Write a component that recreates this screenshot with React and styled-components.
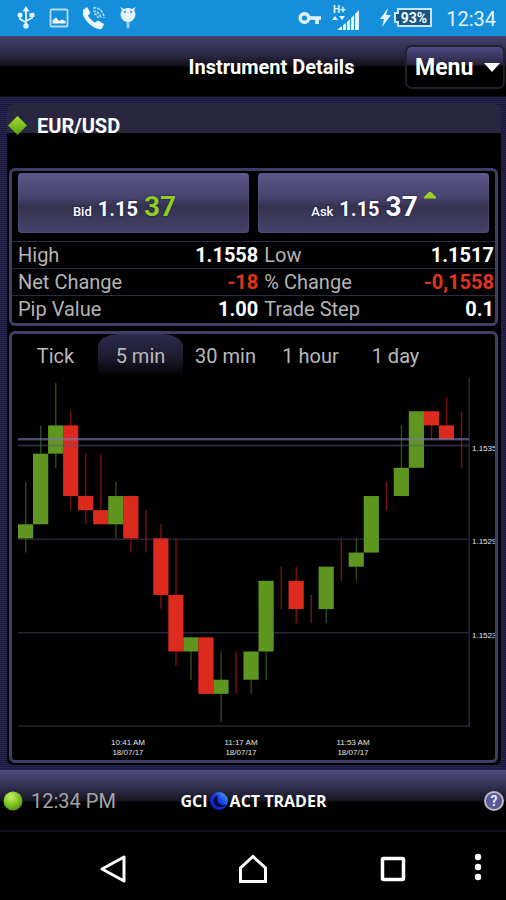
import { useState } from 'react';
import styled, { createGlobalStyle, css } from 'styled-components';

const GlobalStyle = createGlobalStyle`
  * {
    box-sizing: border-box;
  }

  body {
    margin: 0;
    background: #000;
    color: #fff;
    font-family: Roboto, 'Liberation Sans', sans-serif;
  }

  button {
    font-family: inherit;
    color: inherit;
    border: none;
    padding: 0;
    background: none;
    cursor: pointer;
  }
`;

const Screen = styled.div`
  display: flex;
  flex-direction: column;
  min-height: 100vh;
`;

const StatusBar = styled.div`
  display: flex;
  align-items: center;
  justify-content: space-between;
  height: 36px;
  padding: 0 10px 0 16px;
  background: #158fdc;
  color: #e4f4ff;
`;

const StatusGroup = styled.div`
  display: flex;
  align-items: center;
  gap: ${(props) => props.$gap}px;
`;

const Clock = styled.span`
  margin-left: 4px;
  padding-top: 2px;
  font-size: 20px;
  line-height: 34px;
`;

const Header = styled.header`
  display: grid;
  grid-template-columns: 1fr auto 1fr;
  align-items: center;
  height: 61px;
  padding: 2px 3px 0 0;
  background: linear-gradient(#45416f 0, #28253f 20px, #11101a 30px, #000 31px);
  border-bottom: 1px solid #0e0d18;
`;

const Title = styled.h1`
  grid-column: 2;
  margin: 0;
  padding-left: 40px;
  font-size: 20px;
  line-height: 24px;
  font-weight: 700;
`;

const MenuButton = styled.button`
  justify-self: end;
  display: flex;
  align-items: center;
  justify-content: space-between;
  width: 96px;
  height: 40px;
  padding: 0 3px 0 8px;
  border-radius: 5px;
  background: linear-gradient(#504b85 0, #27243f 18px, #000 19px);
  box-shadow: 0 0 1px 2px #24222e;
  font-size: 23px;
  font-weight: 700;
`;

const Body = styled.main`
  flex: 1;
  display: flex;
  flex-direction: column;
  padding: 7px 5px 5px 7px;
  background: repeating-linear-gradient(#28254f 0 1px, #19173b 1px 2px);
`;

const Content = styled.div`
  flex: 1;
  display: flex;
  flex-direction: column;
  padding-bottom: 2px;
  border-radius: 6px;
  overflow: hidden;
  background: #000;
`;

const SymbolBar = styled.div`
  display: flex;
  align-items: center;
  gap: 9px;
  height: 29px;
  padding-top: 14px;
  margin-bottom: 35px;
  background: #292740;
`;

const SymbolName = styled.h2`
  margin: 0;
  font-size: 20px;
  line-height: 24px;
  font-weight: 700;
`;

const panel = css`
  margin: 0 3px 0 2px;
  border: 3px solid #403d68;
  border-radius: 6px;
`;

const QuotePanel = styled.section`
  ${panel}
  margin-bottom: 5px;
`;

const Quotes = styled.div`
  display: grid;
  grid-template-columns: 1fr 1fr;
  gap: 9px;
  padding: 2px 6px 8px;
`;

const QuoteButton = styled.button`
  display: flex;
  align-items: baseline;
  justify-content: center;
  gap: 6px;
  height: 60px;
  padding-top: 18px;
  border-radius: 4px;
  background: linear-gradient(#5b5788, #45426c 42%, #35324f 56%, #45416c);
  box-shadow: inset 0 0 2px #6b6798;
  font-weight: 700;
  line-height: 32px;
  text-shadow: 0 0 2px #0b0a50;
`;

const QuoteSide = styled.span`
  font-size: 13px;
  font-weight: 500;
`;

const QuoteBase = styled.span`
  font-size: 20px;
`;

const QuotePips = styled.span`
  font-size: 28px;
  color: ${(props) => (props.$up ? '#8fce1e' : '#fff')};
`;

const Trend = styled.span`
  display: flex;
  align-self: flex-start;
  width: 12px;
`;

const Stats = styled.table`
  width: 100%;
  border-collapse: collapse;
  font-size: 20px;
`;

const StatRow = styled.tr`
  border-top: 1px solid #2b2944;
  height: 27px;
`;

const StatLabel = styled.th`
  width: 26%;
  padding: 0 0 0 6px;
  color: #b4b4b4;
  font-weight: 400;
  text-align: left;
  white-space: nowrap;
`;

const StatValue = styled.td`
  padding: 0 1px 0 0;
  color: ${(props) => (props.$down ? '#e2341d' : '#fff')};
  font-weight: 700;
  text-align: right;

  &:nth-child(2) {
    width: 25%;
    padding: 0;
  }
`;

const ChartPanel = styled.section`
  ${panel}
  flex: 1;
`;

const Tabs = styled.div`
  display: flex;
  padding-left: 1px;
`;

const Tab = styled.button`
  width: 85px;
  height: 41px;
  padding-top: 3px;
  border-radius: 22px 22px 0 0 / 12px 12px 0 0;
  background: ${(props) => (props.$active ? 'linear-gradient(#2e2b4d, #1b1a2c 60%, #020203)' : 'none')};
  color: #b9b9b9;
  font-size: 20px;
`;

const ChartSvg = styled.svg`
  display: block;
  width: 100%;
  height: auto;
`;

const Footer = styled.footer`
  display: grid;
  grid-template-columns: 1fr auto 1fr;
  align-items: center;
  height: 62px;
  padding: 2px 2px 0 3px;
  background: linear-gradient(#4f4b7d 0, #2a2744 21px, #16151f 31px, #000 32px);
  border-bottom: 2px solid #12111f;
`;

const Connection = styled.div`
  display: flex;
  align-items: center;
  gap: 8px;
  color: #a5a5a5;
  font-size: 20px;
`;

const Brand = styled.div`
  display: flex;
  align-items: center;
  gap: 1px;
  font-family: 'Open Sans', sans-serif;
  font-size: 16px;
  font-weight: 700;
`;

const HelpButton = styled.button`
  justify-self: end;
  width: 20px;
  height: 20px;
  border: 2px solid #b9b8c8;
  border-radius: 50%;
  background: #5b5995;
  color: #e6e6f2;
  font-size: 14px;
  line-height: 16px;
  font-weight: 700;
`;

const NavBar = styled.nav`
  display: grid;
  grid-template-columns: 1fr 140px 140px 140px 1fr;
  height: 68px;
  padding-top: 5px;
`;

const NavButton = styled.button`
  display: flex;
  align-items: center;
  justify-content: center;
`;

const MoreButton = styled(NavButton)`
  width: 30px;
  padding-bottom: 4px;
`;

const STATS = [
  [{ label: 'High', value: '1.1558' }, { label: 'Low', value: '1.1517' }],
  [{ label: 'Net Change', value: '-18', down: true }, { label: '% Change', value: '-0,1558', down: true }],
  [{ label: 'Pip Value', value: '1.00' }, { label: 'Trade Step', value: '0.1' }],
];

const PERIODS = ['Tick', '5 min', '30 min', '1 hour', '1 day'];

// [direction, wick top, body top, body bottom, wick bottom], in pips below the top
const CANDLES = [
  ['up', 7, 10, 11, 12],
  ['up', 3, 5, 10, 10],
  ['up', 0, 3, 5, 6],
  ['down', 2, 3, 8, 9],
  ['down', 5, 8, 9, 10],
  ['down', 5, 9, 10, 10],
  ['up', 7, 8, 10, 11],
  ['down', 8, 8, 11, 12],
  ['down', 9, 9, 9, 12],
  ['down', 10, 11, 15, 16],
  ['down', 11, 15, 19, 20],
  ['up', 18, 18, 19, 21],
  ['down', 18, 18, 22, 22],
  ['up', 19, 21, 22, 24],
  ['down', 19, 19, 19, 22],
  ['up', 19, 19, 21, 22],
  ['up', 14, 14, 19, 21],
  ['down', 13, 13, 13, 16],
  ['down', 13, 14, 16, 17],
  ['down', 15, 15, 15, 17],
  ['up', 13, 13, 16, 17],
  ['down', 11, 11, 11, 14],
  ['up', 11, 12, 13, 14],
  ['up', 8, 8, 12, 12],
  ['down', 7, 7, 7, 9],
  ['up', 3, 6, 8, 8],
  ['up', 2, 2, 6, 6],
  ['down', 2, 2, 3, 4],
  ['down', 1, 3, 4, 4],
  ['down', 2, 2, 2, 6],
];

const STEP = 15.03;
const PIP = 14.13;
const TOP = 8;

const BODY_COLORS = { up: '#5e9620', down: '#dd2a1f' };
const WICK_COLORS = { up: '#2f4d0e', down: '#76130f' };

function Candle({ index, data }) {
  const [dir, high, open, close, low] = data;
  const x = 6 + index * STEP;
  const y = (level) => TOP + level * PIP;
  return (
    <g>
      <rect x={x + 7} y={y(high)} width="1.4" height={y(low) - y(high)} fill={WICK_COLORS[dir]} />
      {close > open && (
        <rect x={x} y={y(open)} width="15.2" height={y(close) - y(open)} fill={BODY_COLORS[dir]} />
      )}
    </g>
  );
}

function Chart() {
  return (
    <ChartSvg viewBox="0 0 483 384" role="img" aria-label="EUR/USD">
      <g fill="#292741">
        <rect x="6" y="163.5" width="451" height="1.4" />
        <rect x="6" y="257" width="451" height="1.4" />
        <rect x="6" y="350" width="452" height="2" fill="#1d1b2e" />
        <rect x="456.5" y="3" width="1.6" height="349" fill="#252338" />
      </g>
      {CANDLES.map((data, i) => (
        <Candle key={i} index={i} data={data} />
      ))}
      <rect x="6" y="63" width="451" height="2.4" fill="#7b74ac" fillOpacity="0.65" />
      <rect x="6" y="69.5" width="451" height="2" fill="#5a5585" fillOpacity="0.45" />
      <g fill="#e2e2e2" fontFamily="'Liberation Sans', sans-serif" fontSize="8">
        <text x="460" y="76">1.1535</text>
        <text x="460" y="169">1.1529</text>
        <text x="460" y="263">1.1523</text>
        <g textAnchor="middle">
          <text x="116" y="370">10:41 AM</text>
          <text x="116" y="380">18/07/17</text>
          <text x="229" y="370">11:17 AM</text>
          <text x="229" y="380">18/07/17</text>
          <text x="341" y="370">11:53 AM</text>
          <text x="341" y="380">18/07/17</text>
        </g>
      </g>
    </ChartSvg>
  );
}

const UsbIcon = () => (
  <svg width="20" height="24" viewBox="-1 0 20 24" fill="none" stroke="#e4f4ff" strokeWidth="1.8">
    <path d="M9 3v17M3 9v4l6 3.5M15 9v3l-6 3" />
    <path d="M9 0l3.500 5.500h-7zM12.500 7h5v4h-5z" fill="#e4f4ff" stroke="none" />
    <circle cx="3" cy="9" r="2.5" fill="#e4f4ff" stroke="none" />
    <circle cx="9" cy="20" r="2.7" fill="#e4f4ff" stroke="none" />
  </svg>
);

const PictureIcon = () => (
  <svg width="20" height="20" viewBox="0 0 20 20">
    <rect x="1.5" y="1.5" width="17" height="17" rx="1" fill="none" stroke="#b4def8" strokeWidth="1.8" />
    <path d="M3.500 15.500v-3l3.500-3 3 3.500 3-1.500 3.500 1.500v2.500z" fill="#f2faff" />
  </svg>
);

const CallIcon = () => (
  <svg width="24" height="24" viewBox="0 0 24 24">
    <path d="M1 4l4-3 3.500 6L6 9.500c1.500 3 4 5.500 7 7l3-2 6 3.500-2 4.500c-1 1-3 1-5 0C8 20 3 14 1 9z" fill="#eef8ff" />
    <path d="M11 2c6-1 11 4 11 10M11 5c4 0 7 3 8 7M12 8c2 0 4 2 4 4" fill="none" stroke="#b4def8" strokeWidth="1.6" strokeDasharray="3 1" />
  </svg>
);

const DebugIcon = () => (
  <svg width="18" height="24" viewBox="0 0 18 24">
    <path d="M3 4L1 1l4 2a9 9 0 0 1 8 0l4-2-2 3c2 3 2 7-1 10-1 1-3 2-5 2s-4-1-5-2C1 11 1 7 3 4z" fill="#e4f4ff" />
    <path d="M7.500 16h3v5l-1.500 2-1.500-2z" fill="#9bd2f5" />
    <circle cx="6" cy="6" r="1" fill="#158fdc" />
    <circle cx="12" cy="6" r="1" fill="#158fdc" />
  </svg>
);

const KeyIcon = () => (
  <svg width="24" height="14" viewBox="0 0 24 14" fill="none" stroke="#e4f4ff">
    <circle cx="6.5" cy="7" r="4.3" strokeWidth="3.4" />
    <path d="M11 7h12M19 7v6" strokeWidth="3.6" />
  </svg>
);

const SignalIcon = () => (
  <svg width="30" height="28" viewBox="0 0 30 28" fill="#e4f4ff">
    <text x="2" y="9" fontSize="10" fontWeight="700" fontFamily="Roboto, sans-serif">H+</text>
    <path d="M1 16l3-4 3 4zM8 12h6l-3 4z" />
    <path d="M7 26v-1l4-3v4zM12 26v-5l3-2v7zM16 26v-8l3-3v11zM20 26V14l3-3v15z" />
    <path d="M24 26V10l4-4v20z" />
  </svg>
);

const BatteryIcon = () => (
  <svg width="54" height="22" viewBox="0 0 54 22">
    <path d="M9 1L1 12h4l-2 8 9-12H7z" fill="#e4f4ff" />
    <path d="M19 2h33v17H19v-4h-3V6h3z" fill="#1a5680" stroke="#c5e6fa" strokeWidth="2" />
    <text x="35" y="16" textAnchor="middle" fontSize="14" fontWeight="700" fill="#f2faff" fontFamily="Roboto, sans-serif">93%</text>
  </svg>
);

const Diamond = () => (
  <svg width="21" height="21" viewBox="0 0 21 21">
    <defs>
      <linearGradient id="diamond" x1="0" y1="0" x2="0" y2="1">
        <stop offset="0" stopColor="#a4df35" />
        <stop offset="1" stopColor="#5c9a0c" />
      </linearGradient>
    </defs>
    <path d="M10.500 1l9.500 9.500-9.500 9.500L1 10.500z" fill="url(#diamond)" />
  </svg>
);

const UpArrow = () => (
  <svg width="12" height="8" viewBox="0 0 12 8">
    <path d="M0 7.5V6L5 1h2l5 5v1.5z" fill="#9bce1e" />
  </svg>
);

const StatusDot = () => (
  <svg width="20" height="20" viewBox="0 0 20 20">
    <defs>
      <radialGradient id="dot" cx="0.4" cy="0.3" r="0.7">
        <stop offset="0" stopColor="#c8f06c" />
        <stop offset="0.6" stopColor="#7dc521" />
        <stop offset="1" stopColor="#5a9215" />
      </radialGradient>
    </defs>
    <circle cx="10" cy="10" r="9.5" fill="url(#dot)" />
  </svg>
);

const BrandMark = () => (
  <svg width="20" height="20" viewBox="0 0 20 20">
    <defs>
      <linearGradient id="globe" x1="0" y1="1" x2="1" y2="0">
        <stop offset="0" stopColor="#0a14c8" />
        <stop offset="0.55" stopColor="#1440dc" />
        <stop offset="1" stopColor="#5ab4f4" />
      </linearGradient>
    </defs>
    <circle cx="10" cy="10" r="9" fill="url(#globe)" />
    <path d="M9 4c-4 2-6 6-3 10 3 3 8 3 12 0-4 1-7 0-9-3-1-2-1-4 0-7z" fill="#040838" />
  </svg>
);

function Quote({ side, base, pips, up, rising }) {
  return (
    <QuoteButton type="button">
      <QuoteSide>{side}</QuoteSide>
      <QuoteBase>{base}</QuoteBase>
      <QuotePips $up={up}>{pips}</QuotePips>
      <Trend>{rising && <UpArrow />}</Trend>
    </QuoteButton>
  );
}

export default function App() {
  const [period, setPeriod] = useState('5 min');

  return (
    <>
      <GlobalStyle />
      <Screen>
        <StatusBar>
          <StatusGroup $gap={13}>
            <UsbIcon />
            <PictureIcon />
            <CallIcon />
            <DebugIcon />
          </StatusGroup>
          <StatusGroup $gap={9}>
            <KeyIcon />
            <SignalIcon />
            <span />
            <BatteryIcon />
            <Clock>12:34</Clock>
          </StatusGroup>
        </StatusBar>

        <Header>
          <Title>Instrument Details</Title>
          <MenuButton type="button">
            Menu
            <svg width="16" height="9" viewBox="0 0 16 9">
              <path d="M0 0h16L8 9z" fill="#fff" />
            </svg>
          </MenuButton>
        </Header>

        <Body>
          <Content>
            <SymbolBar>
              <Diamond />
              <SymbolName>EUR/USD</SymbolName>
            </SymbolBar>

            <QuotePanel>
              <Quotes>
                <Quote side="Bid" base="1.15" pips="37" up />
                <Quote side="Ask" base="1.15" pips="37" rising />
              </Quotes>
              <Stats>
                <tbody>
                  {STATS.map(([left, right]) => (
                    <StatRow key={left.label}>
                      <StatLabel scope="row">{left.label}</StatLabel>
                      <StatValue $down={left.down}>{left.value}</StatValue>
                      <StatLabel scope="row">{right.label}</StatLabel>
                      <StatValue $down={right.down}>{right.value}</StatValue>
                    </StatRow>
                  ))}
                </tbody>
              </Stats>
            </QuotePanel>

            <ChartPanel>
              <Tabs>
                {PERIODS.map((p) => (
                  <Tab key={p} type="button" $active={p === period} onClick={() => setPeriod(p)}>
                    {p}
                  </Tab>
                ))}
              </Tabs>
              <Chart />
            </ChartPanel>
          </Content>
        </Body>

        <Footer>
          <Connection>
            <StatusDot />
            12:34 PM
          </Connection>
          <Brand>
            GCI
            <BrandMark />
            ACT TRADER
          </Brand>
          <HelpButton type="button" aria-label="Help">?</HelpButton>
        </Footer>

        <NavBar>
          <span />
          <NavButton type="button" aria-label="Back">
            <svg width="28" height="30" viewBox="0 0 28 30" fill="none" stroke="#fff" strokeWidth="3">
              <path d="M25 3v24L3 15z" strokeLinejoin="round" />
            </svg>
          </NavButton>
          <NavButton type="button" aria-label="Home">
            <svg width="30" height="30" viewBox="0 0 30 30" fill="none" stroke="#fff" strokeWidth="3">
              <path d="M2.500 27.500V14L15 2.500 27.500 14v13.500z" />
            </svg>
          </NavButton>
          <NavButton type="button" aria-label="Recent apps">
            <svg width="26" height="26" viewBox="0 0 26 26" fill="none" stroke="#fff" strokeWidth="3.5">
              <rect x="2.5" y="2.5" width="21" height="21" rx="1" />
            </svg>
          </NavButton>
          <MoreButton type="button" aria-label="More">
            <svg width="8" height="28" viewBox="0 0 8 28" fill="#fff">
              <circle cx="4" cy="4" r="3.2" />
              <circle cx="4" cy="14" r="3.2" />
              <circle cx="4" cy="24" r="3.2" />
            </svg>
          </MoreButton>
        </NavBar>
      </Screen>
    </>
  );
}
